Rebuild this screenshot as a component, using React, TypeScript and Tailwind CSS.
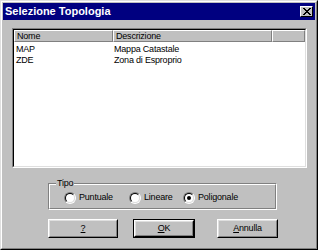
import React from "react";

function Radio({ checked }: { checked?: boolean }) {
  return (
    <div className="w-[12px] h-[12px] rounded-full border border-t-[#808080] border-l-[#808080] border-r-white border-b-white shrink-0">
      <div className="w-full h-full rounded-full border border-t-black border-l-black border-r-[#dfdfdf] border-b-[#dfdfdf] bg-white flex items-center justify-center">
        {checked && <div className="w-[4px] h-[4px] rounded-full bg-black" />}
      </div>
    </div>
  );
}

function Btn({
  children,
  w,
  isDefault,
}: {
  children: React.ReactNode;
  w: string;
  isDefault?: boolean;
}) {
  const inner = (
    <div className="h-full w-full border border-t-white border-l-white border-r-black border-b-black">
      <div className="h-full w-full border border-t-[#dfdfdf] border-l-[#dfdfdf] border-r-[#808080] border-b-[#808080] flex items-center justify-center">
        {children}
      </div>
    </div>
  );
  return (
    <div className={`${w} h-[19px] shrink-0 ${isDefault ? "border border-black" : ""}`}>
      {inner}
    </div>
  );
}

function HeaderCell({ children, w }: { children?: React.ReactNode; w: string }) {
  return (
    <div
      className={`${w} h-[12px] shrink-0 bg-[#c0c0c0] border border-t-white border-l-white border-r-[#808080] border-b-[#808080] flex items-center pl-[2px] leading-[10px]`}
    >
      {children}
    </div>
  );
}

export default function App() {
  return (
    <div className="w-[318px] h-[250px] bg-[#c0c0c0] font-['Liberation_Sans',Arial,sans-serif] text-[9px] tracking-[-0.2px] text-black leading-none select-none">
      <div className="w-full h-full border border-t-[#dfdfdf] border-l-[#dfdfdf] border-r-black border-b-black">
        <div className="w-full h-full border border-t-white border-l-white border-r-[#808080] border-b-[#808080] p-px flex flex-col">
          {/* Title bar */}
          <div className="h-[17px] bg-[#000080] flex items-center justify-between pl-[2px] pr-[2px] shrink-0">
            <span className="text-white font-bold text-[11px] tracking-normal leading-none">Selezione Topologia</span>
            <div className="w-[13px] h-[11px] border border-t-white border-l-white border-r-black border-b-black bg-[#c0c0c0] flex items-center justify-center">
              <svg width="8" height="7" viewBox="0 0 8 7" shapeRendering="crispEdges">
                <path
                  d="M0 0h2v1h-2zM6 0h2v1h-2zM1 1h2v1h-2zM5 1h2v1h-2zM2 2h4v1h-4zM3 3h2v1h-2zM2 4h4v1h-4zM1 5h2v1h-2zM5 5h2v1h-2zM0 6h2v1h-2zM6 6h2v1h-2z"
                  fill="#000"
                />
              </svg>
            </div>
          </div>

          {/* List view */}
          <div className="ml-[9px] mt-[8px] w-[295px] h-[140px] shrink-0 border border-t-[#808080] border-l-[#808080] border-r-white border-b-white">
            <div className="w-full h-full border border-t-black border-l-black border-r-[#dfdfdf] border-b-[#dfdfdf] bg-white flex flex-col">
              <div className="flex">
                <HeaderCell w="w-[99px]">Nome</HeaderCell>
                <HeaderCell w="w-[159px]">Descrizione</HeaderCell>
                <HeaderCell w="flex-1" />
              </div>
              <div className="pt-[2px] flex flex-col">
                <div className="h-[11px] flex items-center">
                  <span className="w-[99px] pl-[2px]">MAP</span>
                  <span className="pl-[1px]">Mappa Catastale</span>
                </div>
                <div className="h-[11px] flex items-center">
                  <span className="w-[99px] pl-[2px]">ZDE</span>
                  <span className="pl-[1px]">Zona di Esproprio</span>
                </div>
              </div>
            </div>
          </div>

          {/* Group box */}
          <div className="relative ml-[45px] mt-[15px] w-[229px] h-[27px] shrink-0 border border-t-[#808080] border-l-[#808080] border-r-white border-b-white">
            <div className="w-full h-full border border-t-white border-l-white border-r-[#808080] border-b-[#808080] flex items-center pl-[14px] pt-[2px]">
              <div className="w-[65px] flex items-center gap-[3px]">
                <Radio />
                <span>Puntuale</span>
              </div>
              <div className="w-[54px] flex items-center gap-[3px]">
                <Radio />
                <span>Lineare</span>
              </div>
              <div className="flex items-center gap-[3px]">
                <Radio checked />
                <span>Poligonale</span>
              </div>
            </div>
            <span className="absolute left-[7px] top-[-6px] bg-[#c0c0c0] px-[1px] leading-[11px]">Tipo</span>
          </div>

          {/* Buttons */}
          <div className="flex ml-[45px] mt-[9px] shrink-0">
            <Btn w="w-[70px]">
              <span className="underline decoration-1 underline-offset-[1px]">?</span>
            </Btn>
            <div className="w-[15px]" />
            <Btn w="w-[62px]" isDefault>
              <span>
                <span className="underline decoration-1 underline-offset-[1px]">O</span>K
              </span>
            </Btn>
            <div className="w-[22px]" />
            <Btn w="w-[61px]">
              <span>
                <span className="underline decoration-1 underline-offset-[1px]">A</span>nnulla
              </span>
            </Btn>
          </div>
        </div>
      </div>
    </div>
  );
}
